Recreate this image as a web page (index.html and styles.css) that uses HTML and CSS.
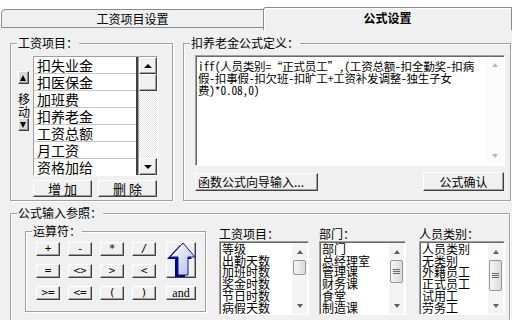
FILE: index.html
```html
<!DOCTYPE html>
<html>
<head>
<meta charset="utf-8">
<title>公式设置</title>
<link rel="stylesheet" href="styles.css">
</head>
<body>

<div class="window">
  <div class="tabs">
    <div class="tab">工资项目设置</div>
    <div class="tab tab-active">公式设置</div>
  </div>

  <div class="panel">
    <div class="top-row">

      <!-- 工资项目 list with move / add / delete -->
      <div class="group items-group">
        <span class="group-title">工资项目：</span>
        <div class="move-col">
          <button class="move-btn"><span class="tri tri-up"></span></button>
          <div class="move-label">移<br>动</div>
          <button class="move-btn"><span class="tri tri-down"></span></button>
        </div>
        <div class="list-col">
          <div class="listbox">
            <ul class="item-list">
              <li>扣失业金</li>
              <li>扣医保金</li>
              <li>加班费</li>
              <li>扣养老金</li>
              <li>工资总额</li>
              <li>月工资</li>
              <li>资格加给</li>
            </ul>
            <div class="classic-scroll">
              <div class="cs-btn"><span class="tri tri-up"></span></div>
              <div class="cs-thumb"></div>
              <div class="cs-track"></div>
              <div class="cs-btn"><span class="tri tri-down"></span></div>
            </div>
          </div>
          <div class="btn-row">
            <button class="btn btn-small">增 加</button>
            <button class="btn btn-small">删 除</button>
          </div>
        </div>
      </div>

      <!-- formula editor -->
      <div class="group formula-group">
        <span class="group-title">扣养老金公式定义：</span>
        <div class="editor">
          <div class="editor-text">iff(人员类别=“正式员工”,(工资总额-扣全勤奖-扣病<br>假-扣事假-扣欠班-扣旷工+工资补发调整-独生子女<br>费)*0.08,0)</div>
          <div class="flat-scroll flat-disabled">
            <span class="arrow arrow-up"></span>
            <span class="arrow arrow-down"></span>
          </div>
        </div>
        <div class="formula-actions">
          <button class="btn btn-wizard">函数公式向导输入...</button>
          <button class="btn btn-confirm">公式确认</button>
        </div>
      </div>
    </div>

    <!-- reference pickers -->
    <div class="group ref-group">
      <span class="group-title">公式输入参照：</span>

      <div class="group ops-group">
        <span class="group-title">运算符：</span>
        <div class="ops-grid">
          <button class="btn op">+</button>
          <button class="btn op">-</button>
          <button class="btn op">*</button>
          <button class="btn op">/</button>
          <button class="btn op-insert">
            <svg width="30" height="36" viewBox="0 0 30 36">
              <defs>
                <linearGradient id="face" x1="0" y1="0" x2="1" y2="1">
                  <stop offset="0" stop-color="#ffffff"/>
                  <stop offset="1" stop-color="#aebce9"/>
                </linearGradient>
              </defs>
              <polygon points="14,3 26,17 19,17 19,35 9,35 9,17 1,17" fill="#000080"/>
              <polygon points="17,1 29,15 22,15 22,33 12,33 12,15 4,15" fill="url(#face)" stroke="#14148c" stroke-width="1"/>
              <line x1="17" y1="3" x2="7" y2="14" stroke="#ffffff" stroke-width="1"/>
            </svg>
          </button>
          <button class="btn op">=</button>
          <button class="btn op">&lt;&gt;</button>
          <button class="btn op">&gt;</button>
          <button class="btn op">&lt;</button>
          <button class="btn op">&gt;=</button>
          <button class="btn op">&lt;=</button>
          <button class="btn op">(</button>
          <button class="btn op">)</button>
          <button class="btn op op-and">and</button>
        </div>
      </div>

      <div class="ref-list ref-wage">
        <div class="ref-label">工资项目：</div>
        <div class="ref-box">
          <div class="ref-items">等级<br>出勤天数<br>加班时数<br>奖金时数<br>节日时数<br>病假天数</div>
          <div class="flat-scroll">
            <span class="arrow arrow-up"></span>
            <span class="thumb" style="height: 15px"></span>
            <span class="arrow arrow-down"></span>
          </div>
        </div>
      </div>

      <div class="ref-list ref-dept">
        <div class="ref-label">部门：</div>
        <div class="ref-box">
          <div class="ref-items">部门<br>总经理室<br>管理课<br>财务课<br>食堂<br>制造课</div>
          <div class="flat-scroll">
            <span class="arrow arrow-up"></span>
            <span class="thumb" style="height: 23px"><span class="grip"></span></span>
            <span class="arrow arrow-down"></span>
          </div>
        </div>
      </div>

      <div class="ref-list ref-type">
        <div class="ref-label">人员类别：</div>
        <div class="ref-box">
          <div class="ref-items">人员类别<br>无类别<br>外籍员工<br>正式员工<br>试用工<br>劳务工</div>
          <div class="flat-scroll">
            <span class="arrow arrow-up"></span>
            <span class="thumb" style="height: 31px"><span class="grip"></span></span>
            <span class="arrow arrow-down"></span>
          </div>
        </div>
      </div>
    </div>
  </div>
</div>

</body>
</html>
```

FILE: styles.css
```css
* {
  box-sizing: border-box;
}
body {
  margin: 0;
  font-family: "Noto Sans CJK SC", "Liberation Sans", sans-serif;
  font-size: 12px;
  color: #000;
  background: #f0f0f0;
}
.window {
  width: 512px;
  height: 320px;
  overflow: hidden;
  background: #f0f0f0;
}

/* tab strip */
.tabs {
  display: flex;
  align-items: flex-end;
  height: 30px;
  background: linear-gradient(#fff 28px, #f0f0f0 28px);
}
.tab {
  width: 263px;
  height: 19px;
  margin: 0 0 2px 1px;
  border: 1px solid #898c95;
  border-radius: 4px 0 0 0;
  background: #f0f0f0;
  text-align: center;
  line-height: 17px;
}
.tab-active {
  flex: 1;
  width: auto;
  height: 23px;
  margin: 0 0 0 -1px;
  border-bottom: none;
  border-radius: 3px 0 0 0;
  box-shadow: inset 1px 1px #fff;
  font-weight: bold;
  line-height: 20px;
}

.panel {
  padding: 13px 0 0 10px;
}
.top-row {
  display: flex;
}

/* group boxes */
.group {
  position: relative;
  border: 1px solid #a0a0a0;
  box-shadow: 1px 1px 0 #fff, inset 1px 1px 0 #fff;
}
.group-title {
  position: absolute;
  top: -9px;
  left: 6px;
  padding: 0 1px;
  background: #f0f0f0;
  line-height: 16px;
  white-space: nowrap;
}

/* raised buttons */
.btn {
  padding: 0;
  font-family: inherit;
  font-size: 12px;
  color: #000;
  background: #f0f0f0;
  border: 1px solid;
  border-color: #fff #404040 #404040 #fff;
  box-shadow: inset -1px -1px #a0a0a0;
}

.tri {
  display: block;
  width: 0;
  height: 0;
  border-left: 4px solid transparent;
  border-right: 4px solid transparent;
}
.tri-up {
  border-bottom: 4px solid #000;
}
.tri-down {
  border-top: 4px solid #000;
}

/* 工资项目 */
.items-group {
  display: flex;
  width: 163px;
  height: 158px;
  padding: 12px 14px 0 4px;
}
.move-col {
  display: flex;
  flex-direction: column;
  align-items: center;
  width: 16px;
  padding-top: 15px;
}
.move-btn {
  display: flex;
  align-items: center;
  justify-content: center;
  width: 11px;
  height: 13px;
  padding: 0;
  background: #d8d8d8;
  border: 1px solid;
  border-color: #fff #404040 #404040 #fff;
  box-shadow: inset -1px -1px #909090;
}
.move-btn .tri {
  border-left-width: 3px;
  border-right-width: 3px;
  border-bottom-width: 6px;
}
.move-btn .tri-down {
  border-top-width: 6px;
  border-bottom-width: 0;
}
.move-label {
  margin: 8px 0 0 2px;
  font-size: 12px;
  line-height: 13px;
}
.list-col {
  width: 125px;
  margin-left: 2px;
}
.listbox {
  display: flex;
  height: 120px;
  border: 1px solid;
  border-color: #a0a0a0 #fff #fff #a0a0a0;
  background: #fff;
}
.item-list {
  flex: 1;
  margin: 0;
  padding: 0;
  list-style: none;
  overflow: hidden;
  border-right: 2px solid #404040;
}
.item-list li {
  height: 17px;
  padding-left: 3px;
  border-bottom: 1px solid #c8c8c8;
  font-size: 14px;
  line-height: 16px;
  white-space: nowrap;
}
.classic-scroll {
  display: flex;
  flex-direction: column;
  width: 19px;
  border-left: 1px solid #a0a0a0;
  background: #f0f0f0;
}
.cs-btn,
.cs-thumb {
  display: flex;
  align-items: center;
  justify-content: center;
  height: 17px;
  background: #f0f0f0;
  border: 1px solid;
  border-color: #fff #404040 #404040 #fff;
  box-shadow: inset -1px -1px #a0a0a0;
}
.cs-track {
  flex: 1;
  background: repeating-conic-gradient(#fff 0 25%, #e4e4e4 0 50%) 0 0 / 2px 2px;
}
.btn-row {
  display: flex;
  gap: 6px;
  margin-top: 4px;
}
.btn-small {
  width: 59px;
  height: 17px;
  font-size: 13px;
  line-height: 14px;
}

/* formula editor */
.formula-group {
  width: 328px;
  height: 158px;
  margin-left: 10px;
  padding: 11px 5px 0 11px;
}
.editor {
  display: flex;
  height: 111px;
  border: 1px solid;
  border-color: #a0a0a0 #fff #fff #a0a0a0;
  box-shadow: inset 1px 1px #696969;
  background: #fff;
}
.editor-text {
  flex: 1;
  padding: 4px 0 0 2px;
  font-family: "Noto Sans Mono CJK SC", "Noto Sans CJK SC", monospace;
  font-size: 11.5px;
  letter-spacing: -0.2px;
  line-height: 12px;
  white-space: nowrap;
  overflow: hidden;
}
.flat-scroll {
  display: flex;
  flex-direction: column;
  align-items: center;
  width: 15px;
  background: #f4f4f4;
}
.flat-disabled {
  width: 17px;
  margin: 1px 1px 1px 0;
  justify-content: space-between;
  padding: 6px 0;
  background: #fbfbfb;
}
.arrow {
  display: block;
  width: 0;
  height: 0;
  border-left: 3px solid transparent;
  border-right: 3px solid transparent;
}
.arrow-up {
  margin: 7px 0 6px;
  border-bottom: 4px solid #606060;
}
.arrow-down {
  margin: auto 0 6px;
  border-top: 4px solid #606060;
}
.flat-disabled .arrow {
  margin: 0;
}
.flat-disabled .arrow-up {
  border-bottom-color: #b8b8b8;
}
.flat-disabled .arrow-down {
  border-top-color: #b8b8b8;
}
.thumb {
  display: flex;
  align-items: center;
  justify-content: center;
  width: 13px;
  border: 1px solid #979797;
  border-radius: 2px;
  background: linear-gradient(90deg, #f6f6f6, #dadada);
}
.grip {
  width: 7px;
  height: 5px;
  background: repeating-linear-gradient(#666 0 1px, transparent 1px 2px);
}
.formula-actions {
  display: flex;
  justify-content: space-between;
  margin-top: 7px;
  padding-right: 1px;
}
.btn-wizard {
  width: 123px;
  height: 18px;
  padding-left: 2px;
  text-align: left;
  line-height: 14px;
}
.btn-confirm {
  width: 81px;
  height: 19px;
  margin-top: -1px;
  line-height: 15px;
}

/* 公式输入参照 */
.ref-group {
  display: flex;
  align-items: flex-start;
  width: 500px;
  height: 120px;
  margin-top: 12px;
  padding: 13px 0 0 14px;
}
.ops-group {
  width: 181px;
  height: 81px;
  margin-top: 4px;
  padding: 10px 0 0 10px;
}
.ops-grid {
  display: grid;
  grid-template-columns: repeat(4, 24px) 30px;
  grid-template-rows: repeat(3, 14px);
  gap: 8px;
}
.op {
  display: flex;
  align-items: center;
  justify-content: center;
  height: 14px;
  font-family: "DejaVu Sans Mono", monospace;
  font-size: 11px;
  line-height: 12px;
}
.op-insert {
  grid-column: 5;
  grid-row: 1 / span 2;
  width: 30px;
  height: 36px;
  margin-left: 2px;
  padding: 0;
  background: #f0f0f0;
  border: 1px solid;
  border-color: #fff #404040 #404040 #fff;
}
.op-insert svg {
  display: block;
  margin: -1px 0 0 -1px;
}
.op-and {
  grid-column: 5;
  grid-row: 3;
  width: 30px;
  margin-left: 2px;
  font-family: "Liberation Serif", serif;
  font-size: 12px;
}
.ref-list {
  flex: none;
}
.ref-wage {
  width: 90px;
  margin-left: 13px;
}
.ref-dept {
  width: 87px;
  margin-left: 10px;
}
.ref-type {
  width: 86px;
  margin-left: 13px;
}
.ref-label {
  height: 14px;
  line-height: 14px;
  white-space: nowrap;
}
.ref-box {
  display: flex;
  height: 74px;
  border: 1px solid;
  border-color: #a0a0a0 #fff #fff #a0a0a0;
  box-shadow: inset 1px 1px #696969;
  background: #fff;
}
.ref-items {
  flex: 1;
  padding: 1px 0 0 2px;
  font-size: 12px;
  line-height: 11.7px;
  white-space: nowrap;
  overflow: hidden;
}
.ref-box .flat-scroll {
  margin: 1px 1px 0 0;
}
```
